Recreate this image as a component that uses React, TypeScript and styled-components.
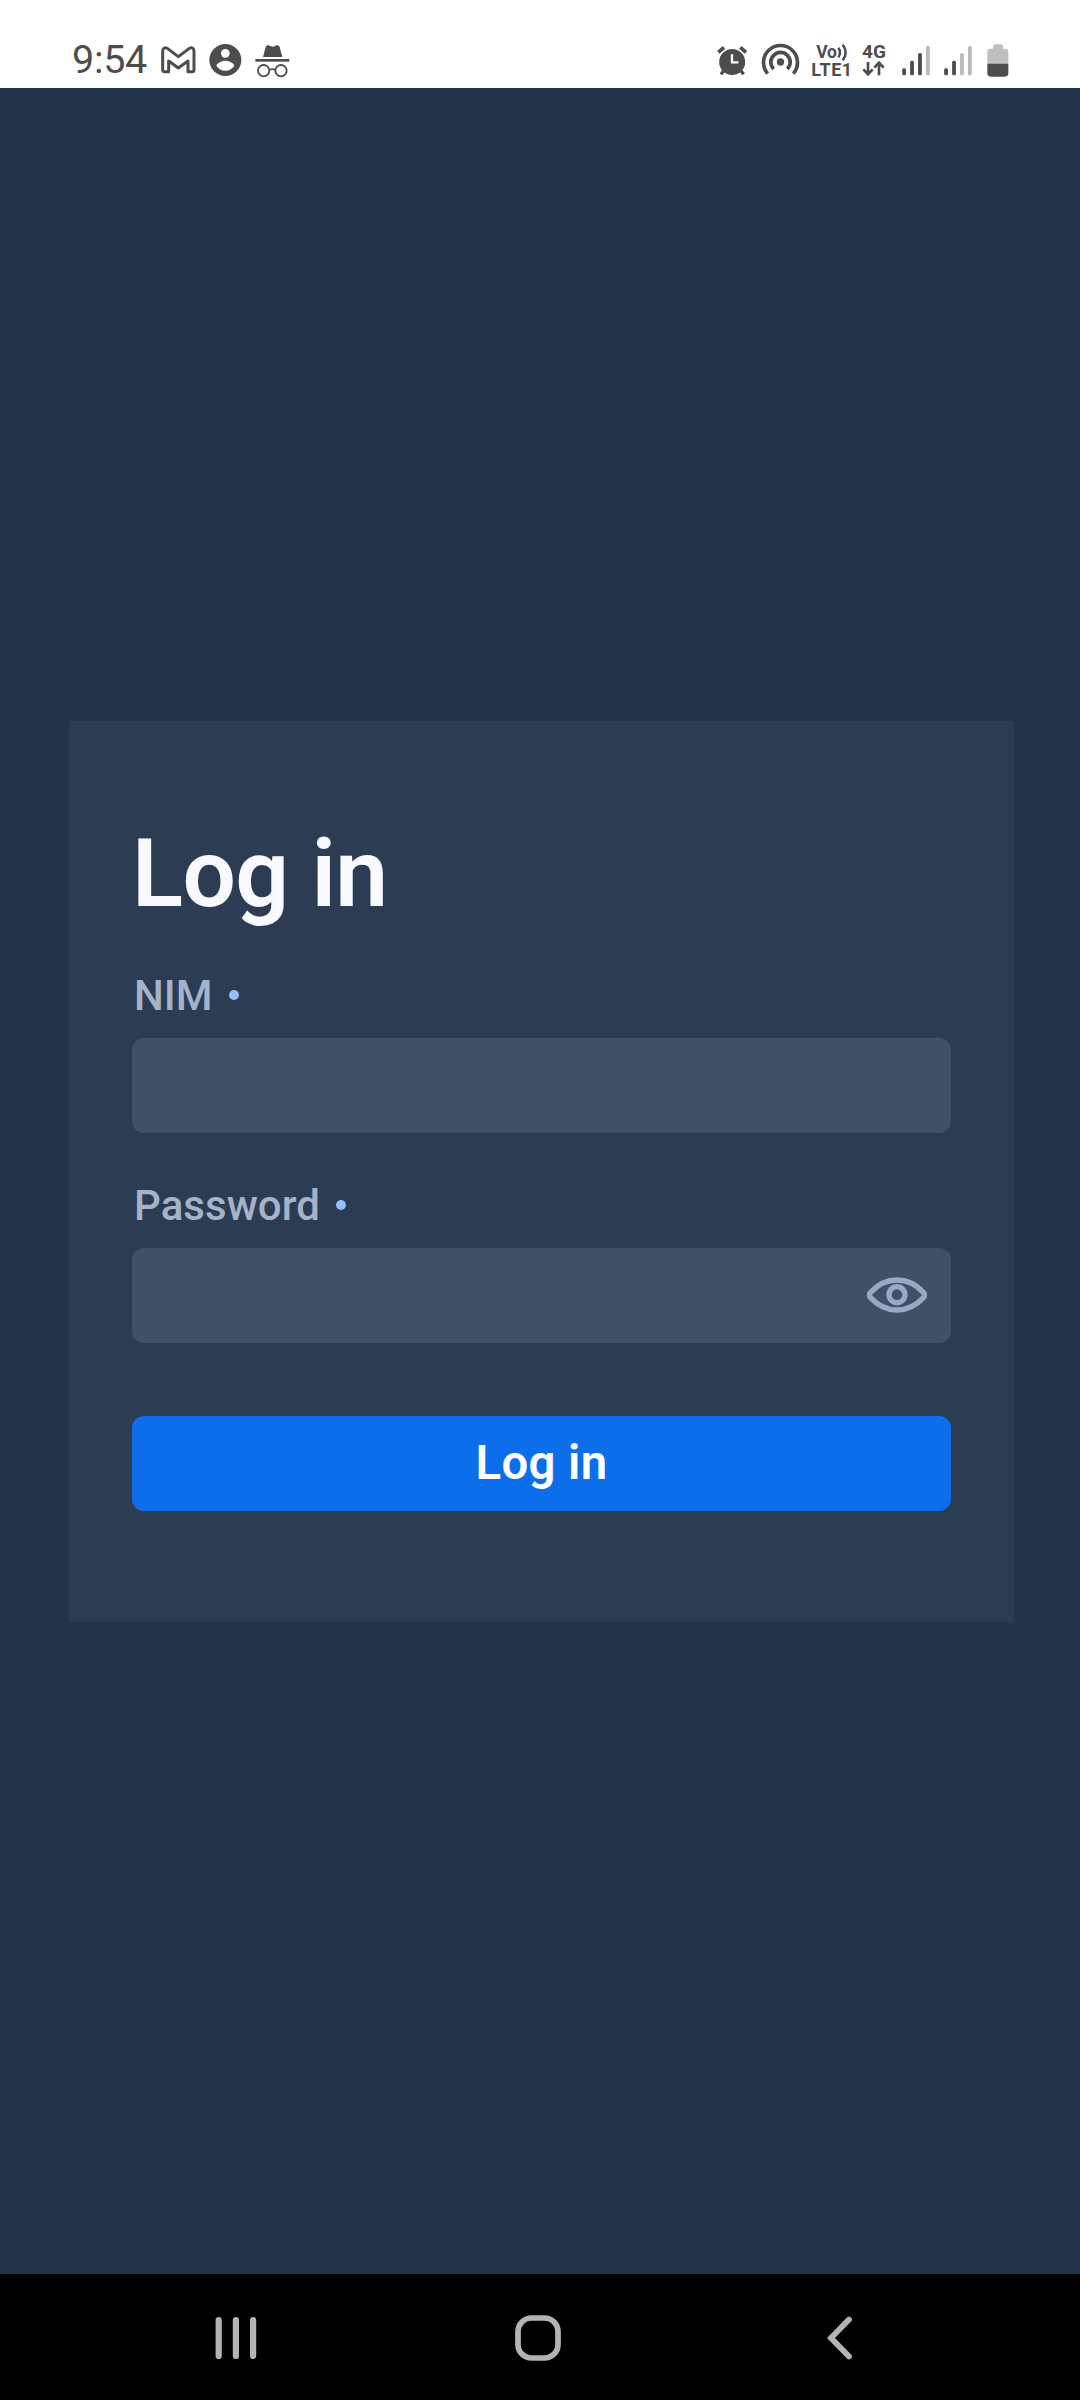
import React from "react";
import styled, { createGlobalStyle } from "styled-components";

const INK = "#4d4d4d";
const FAINT = "#bababa";
const NAV = "#b3b3b3";

const GlobalStyle = createGlobalStyle`
  * { box-sizing: border-box; }
  body { margin: 0; background: #233349; font-family: Roboto, "Noto Sans", sans-serif; }
`;

const Screen = styled.div`
  width: 1080px;
  height: 2400px;
  display: flex;
  flex-direction: column;
  background: #233349;
`;

const StatusBar = styled.header`
  height: 88px;
  flex: none;
  display: flex;
  align-items: flex-start;
  padding: 40px 71px 0 72px;
  background: #fff;
  color: ${INK};
`;

const Clock = styled.span`
  width: 88px;
  font-size: 39.5px;
  line-height: 40px;
  letter-spacing: -0.3px;
`;

const Spacer = styled.div`
  flex: 1;
`;

const Glyph = styled.svg<{ $gap?: number }>`
  display: block;
  flex: none;
  height: 40px;
  margin-left: ${(p) => p.$gap ?? 0}px;
`;

const NetworkLabel = styled.div<{ $w: number; $gap: number }>`
  width: ${(p) => p.$w}px;
  height: 40px;
  margin-left: ${(p) => p.$gap}px;
  padding-top: 3px;
  display: flex;
  flex-direction: column;
  align-items: center;
  flex: none;
`;

const NetworkRow = styled.div<{ $size: number; $spacing?: number }>`
  display: flex;
  align-items: center;
  flex: none;
  height: 18px;
  font-size: ${(p) => p.$size}px;
  line-height: 18px;
  font-weight: 700;
  white-space: nowrap;
  letter-spacing: ${(p) => p.$spacing ?? 0}px;
`;

const Main = styled.main`
  flex: 1;
  display: flex;
  flex-direction: column;
  padding: 633px 66px 0 69px;
`;

const Card = styled.form`
  height: 901px;
  display: flex;
  flex-direction: column;
  padding: 94px 63px 0;
  background: #2c3c53;
`;

const Title = styled.h1`
  margin: 0 0 38px;
  height: 118px;
  font-size: 94.5px;
  line-height: 118px;
  font-weight: 600;
  letter-spacing: -0.6px;
  color: #f8faff;
`;

const Group = styled.div`
  display: flex;
  flex-direction: column;
  margin-bottom: 48px;
`;

const Label = styled.label`
  display: flex;
  align-items: center;
  gap: 16px;
  height: 49px;
  margin-bottom: 18px;
  padding-left: 2px;
  font-size: 42px;
  line-height: 49px;
  font-weight: 500;
  letter-spacing: 0.05px;
  color: #a4b2ca;
`;

const Required = styled.span`
  width: 10px;
  height: 10px;
  border-radius: 5px;
  margin-top: -2px;
  background: #93bffb;
`;

const Field = styled.div`
  display: flex;
  align-items: center;
  height: 95px;
  padding: 0 24px;
  border-radius: 12px;
  background: #3f5067;
`;

const Input = styled.input`
  flex: 1;
  min-width: 0;
  height: 100%;
  border: 0;
  outline: 0;
  background: transparent;
  color: #f8faff;
  font: 42px Roboto, sans-serif;
`;

const Eye = styled.svg`
  flex: none;
  margin-top: -2px;
`;

const Submit = styled.button`
  height: 95px;
  margin-top: 25px;
  padding: 0;
  border: 0;
  border-radius: 12px;
  background: #0d6eec;
  color: #fff;
  font: 600 47.25px/95px Roboto, sans-serif;
  letter-spacing: 0.4px;
`;

const NavBar = styled.nav`
  flex: none;
  height: 126px;
  display: grid;
  grid-template-columns: repeat(3, 302px);
  padding: 2px 0 0 85px;
  place-items: center;
  background: #000;
`;

function Signal({ strength, gap }: { strength: number; gap: number }) {
  const tops = [115, 92, 69, 48];
  return (
    <Glyph $gap={gap} width={28} viewBox="156 30 84 120">
      {tops.map((top, i) => (
        <rect key={top} x={156.5 + i * 23.8} y={top} width={11.5} height={136 - top} rx={4.5} fill={i < strength ? INK : FAINT} />
      ))}
    </Glyph>
  );
}

export default function App() {
  return (
    <Screen>
      <GlobalStyle />
      <StatusBar>
        <Clock>9:54</Clock>
        <Glyph width={37} viewBox="300 30 111 120" fill="none" stroke={INK} strokeWidth={9} strokeLinejoin="round">
          <path d="M308 64C308 54 315 50 323 56L355 80L387 56C395 50 402 54 402 64V119Q402 125 396 125H384V93L355 114L326 93V125H314Q308 125 308 119Z" />
        </Glyph>
        <Glyph $gap={12} width={33} viewBox="447 30 99 120">
          <circle cx={496} cy={90} r={48} fill={INK} />
          <circle cx={496} cy={70} r={13} fill="#fff" />
          <path d="M469 107C473 97 487 92 496 92S519 97 523 107C517 116 507 122 496 122S475 116 469 107Z" fill="#fff" />
        </Glyph>
        <Glyph $gap={13} width={35} viewBox="585 30 105 120">
          <path d="M609 81L617 51Q619 44 626 46L633 49Q638 51 643 49L650 46Q657 44 659 51L667 81Z" fill={INK} />
          <rect x={586} y={87} width={102} height={8} fill={INK} />
          <g fill="none" stroke={INK} strokeWidth={5.5}>
            <circle cx={611} cy={122} r={17} />
            <circle cx={663} cy={122} r={17} />
            <path d="M628 120Q637 115 646 120" />
          </g>
        </Glyph>
        <Spacer />
        <Glyph width={30} viewBox="52 30 90 120" fill="none" stroke={INK} strokeWidth={11}>
          <circle cx={97.5} cy={96} r={39} fill={INK} stroke="none" />
          <path d="M56 67L73 52M122 52L139 67" />
          <path d="M73 120L64 133M122 120L132 133" strokeWidth={10} />
          <path d="M97 73V97H116" stroke="#fff" strokeWidth={7} />
        </Glyph>
        <Glyph $gap={14} width={39} viewBox="183 30 117 120" fill="none" stroke={INK} strokeWidth={11}>
          <circle cx={241.5} cy={96} r={11} fill={INK} stroke="none" />
          <path d="M221 117A29 29 0 1 1 262 117" />
          <path d="M203 131A51 51 0 1 1 280 131" />
        </Glyph>
        <NetworkLabel $gap={12} $w={40}>
          <NetworkRow $size={17.5} $spacing={-0.2}>
            Vo
            <svg width={11} height={17} viewBox="0 0 33 51" fill="none" stroke={INK} strokeWidth={7.5}>
              <path d="M4 11Q14 25 4 40M17 2Q35 25 17 49" />
            </svg>
          </NetworkRow>
          <NetworkRow $size={18} $spacing={0.5}>LTE1</NetworkRow>
        </NetworkLabel>
        <NetworkLabel $gap={9} $w={26}>
          <NetworkRow $size={19}>4G</NetworkRow>
          <svg width={26} height={17} viewBox="34 95 78 51" fill="none" stroke={INK} strokeWidth={8}>
            <path d="M55 98V134M41 120L55 135L69 120M88 138V101M74 115L88 100L102 115" />
          </svg>
        </NetworkLabel>
        <Signal gap={15} strength={3} />
        <Signal gap={14} strength={2} />
        <Glyph $gap={15} width={22} viewBox="410 30 66 120">
          <path d="M411 66Q411 56 421 56H428V49Q428 43 434 43H452Q458 43 458 49V56H464Q474 56 474 66V102H411Z" fill="#bfbfbf" />
          <path d="M411 101H474V130Q474 140 464 140H421Q411 140 411 130Z" fill={INK} />
        </Glyph>
      </StatusBar>

      <Main>
        <Card>
          <Title>Log in</Title>
          <Group>
            <Label htmlFor="nim">NIM<Required /></Label>
            <Field><Input id="nim" /></Field>
          </Group>
          <Group>
            <Label htmlFor="password">Password<Required /></Label>
            <Field>
              <Input id="password" type="password" />
              <Eye width={60} height={36} viewBox="81 139 180 108" fill="none" stroke="#98a9c4" strokeWidth={16}>
                <path d="M91 186C113 162 141 148 171 148S229 162 251 186Q256 193 251 200C229 224 201 238 171 238S113 224 91 200Q86 193 91 186Z" />
                <circle cx={171} cy={192} r={24} />
              </Eye>
            </Field>
          </Group>
          <Submit type="button">Log in</Submit>
        </Card>
      </Main>

      <NavBar>
        <svg width={42} height={44} viewBox="0 0 42 44" fill="none" stroke={NAV} strokeWidth={6.2} strokeLinecap="round">
          <path d="M3.7 4V40M20.9 4V40M38.1 4V40" />
        </svg>
        <svg width={46} height={46} viewBox="0 0 46 46" fill="none" stroke={NAV} strokeWidth={5.7}>
          <rect x={3} y={3} width={40} height={40} rx={13.5} />
        </svg>
        <svg width={26} height={44} viewBox="0 0 26 44" fill="none" stroke={NAV} strokeWidth={5.8} strokeLinecap="round">
          <path d="M22 3.5L4 22L22 40.5" />
        </svg>
      </NavBar>
    </Screen>
  );
}
